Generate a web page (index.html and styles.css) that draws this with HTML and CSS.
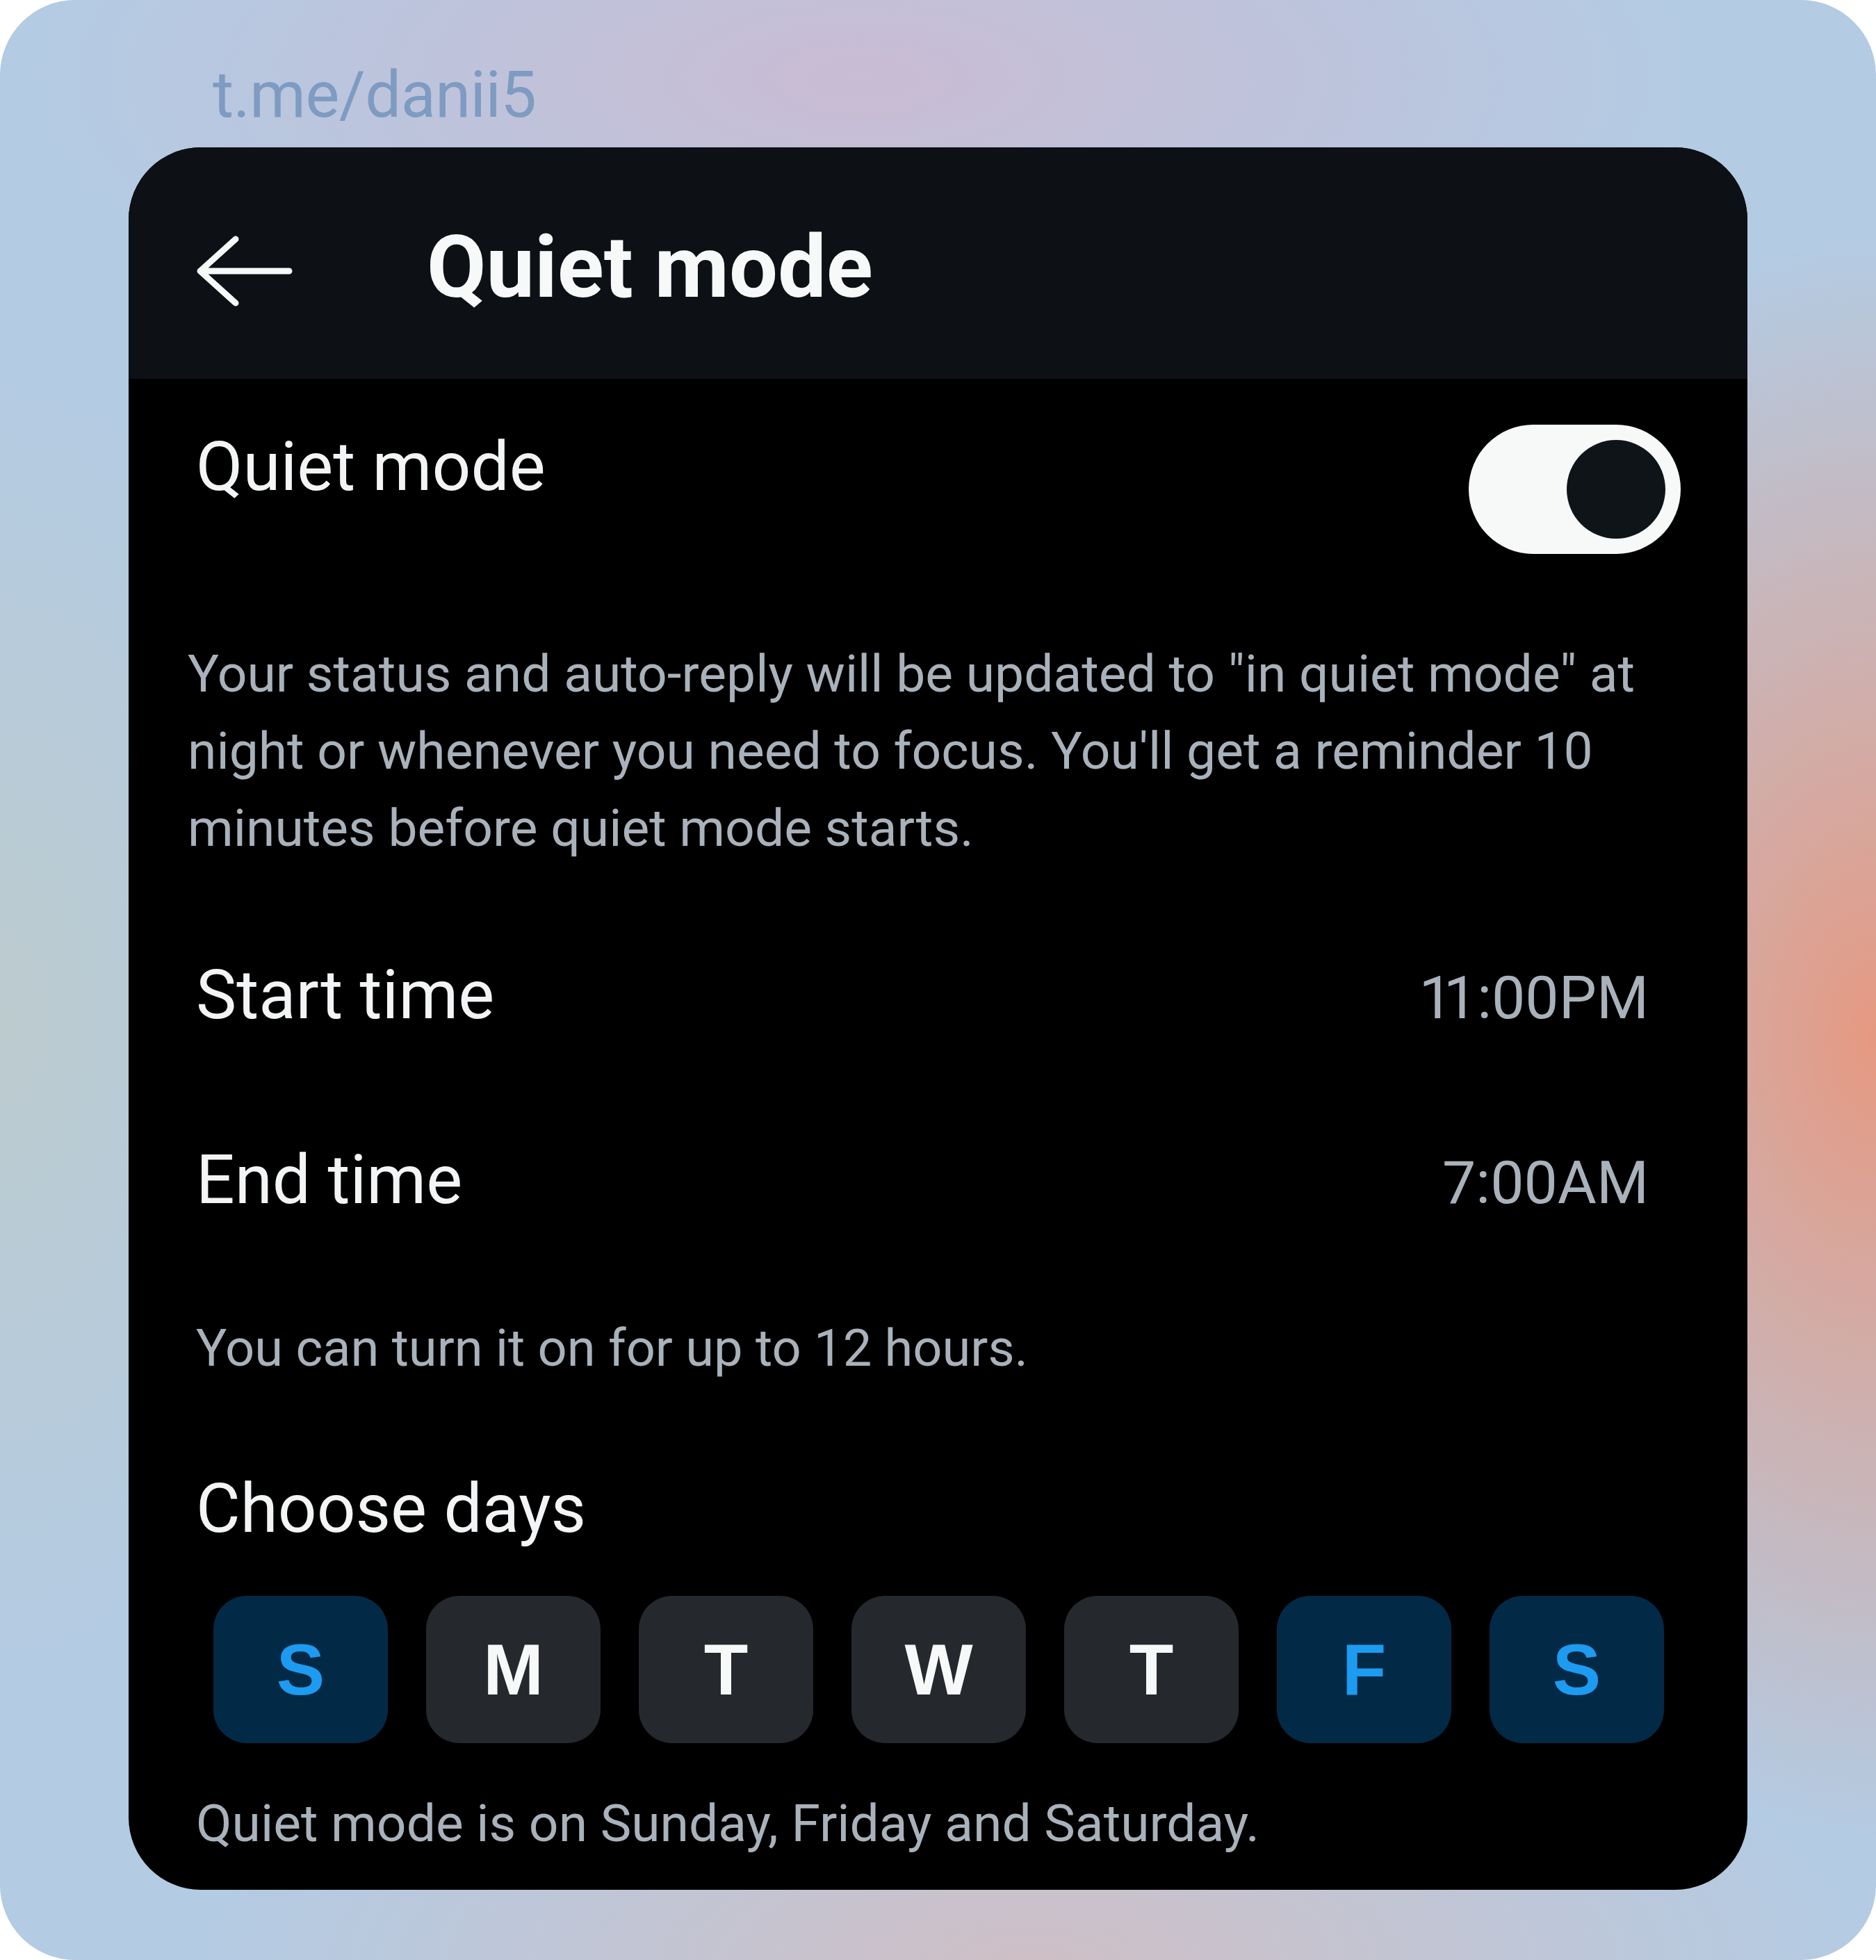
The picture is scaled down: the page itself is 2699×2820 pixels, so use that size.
FILE: index.html
```html
<!DOCTYPE html>
<html lang="en">
<head>
<meta charset="utf-8">
<title>Quiet mode</title>
<link rel="stylesheet" href="styles.css">
</head>
<body>
<div class="frame">
  <div class="watermark">t.me/danii5</div>
  <div class="card">
    <header class="topbar">
      <svg class="back" width="140" height="104" viewBox="0 0 140 104" aria-hidden="true">
        <path d="M58 6 L7 52 L58 98 M7 52 H135" fill="none" stroke="#f7f9f9" stroke-width="9" stroke-linecap="round" stroke-linejoin="round"/>
      </svg>
      <h1 class="title">Quiet mode</h1>
    </header>
    <section class="content">
      <div class="toggle-row">
        <span class="label">Quiet mode</span>
        <span class="switch"><span class="knob"></span></span>
      </div>
      <p class="desc">Your status and auto-reply will be updated to "in quiet mode" at<br>night or whenever you need to focus. You'll get a reminder 10<br>minutes before quiet mode starts.</p>
      <div class="time-row">
        <span class="label">Start time</span>
        <span class="value"><span class="ones">11</span>:00PM</span>
      </div>
      <div class="time-row time-row-end">
        <span class="label">End time</span>
        <span class="value">7:00AM</span>
      </div>
      <p class="note note-limit">You can turn it on for up to 12 hours.</p>
      <div class="label days-label">Choose days</div>
      <div class="days">
        <span class="day day-on">S</span>
        <span class="day">M</span>
        <span class="day">T</span>
        <span class="day">W</span>
        <span class="day">T</span>
        <span class="day day-on">F</span>
        <span class="day day-on">S</span>
      </div>
      <p class="note summary">Quiet mode is on Sunday, Friday and Saturday.</p>
    </section>
  </div>
</div>
</body>
</html>
```

FILE: styles.css
```css
html, body {
  margin: 0;
  padding: 0;
  background: #ffffff;
}

body {
  width: 2699px;
  height: 2820px;
  font-family: Roboto, "Liberation Sans", sans-serif;
}

.frame {
  box-sizing: border-box;
  width: 2699px;
  height: 2820px;
  border-radius: 108px;
  overflow: hidden;
  padding: 83px 185px 0;
  background:
    radial-gradient(ellipse 720px 1150px at 100% 53%, rgba(232, 150, 124, 0.95), rgba(232, 150, 124, 0) 100%),
    radial-gradient(ellipse 1200px 460px at 46% 4%, rgba(208, 182, 206, 0.75), rgba(208, 182, 206, 0) 100%),
    radial-gradient(ellipse 1200px 420px at 55% 100%, rgba(214, 188, 190, 0.8), rgba(214, 188, 190, 0) 100%),
    radial-gradient(ellipse 520px 950px at 0% 52%, rgba(190, 202, 198, 0.75), rgba(190, 202, 198, 0) 100%),
    #b3cbe3;
}

.watermark {
  margin-left: 121px;
  height: 108px;
  font-size: 92px;
  line-height: 108px;
  letter-spacing: -0.5px;
  color: #7e9bc2;
}

.card {
  margin-top: 21px;
  border-radius: 104px;
  overflow: hidden;
  background: #000000;
}

.topbar {
  box-sizing: border-box;
  height: 333px;
  padding-top: 12px;
  display: flex;
  align-items: center;
  background: #0d1015;
}

.back {
  display: block;
  margin-left: 96px;
  margin-top: 10px;
  flex: none;
}

.title {
  margin: 0 0 0 193px;
  font-size: 124px;
  line-height: 145px;
  font-weight: 700;
  color: #f7f9f9;
}

.content {
  padding: 0 146px 54px 97px;
}

.label {
  font-size: 98px;
  line-height: 115px;
  color: #f2f4f5;
}

.toggle-row {
  display: flex;
  justify-content: space-between;
  align-items: flex-start;
  padding-top: 66px;
}

.toggle-row .label {
  margin-top: 3px;
}

.switch {
  box-sizing: border-box;
  width: 305px;
  height: 186px;
  margin-right: -50px;
  border-radius: 93px;
  background: #f7f9f9;
  display: flex;
  align-items: center;
  justify-content: flex-end;
  padding: 0 22px;
}

.knob {
  width: 142px;
  height: 142px;
  border-radius: 50%;
  background: #0f1419;
}

.desc {
  margin: 117px 0 0 -12px;
  font-size: 75px;
  line-height: 111px;
  color: #a9b2bb;
  white-space: nowrap;
}

.time-row {
  display: flex;
  justify-content: space-between;
  align-items: baseline;
  margin-top: 127px;
}

.time-row-end {
  margin-top: 151px;
}

.value {
  font-size: 86px;
  color: #a9b2bb;
  margin-right: -4px;
}

.ones {
  letter-spacing: -13px;
  margin-right: 13px;
}

.note {
  margin: 143px 0 0;
  font-size: 75px;
  line-height: 84px;
  color: #a9b2bb;
  white-space: nowrap;
}

.note-limit {
  font-size: 74px;
}

.days-label {
  margin-top: 131px;
}

.days {
  display: flex;
  gap: 55px;
  margin: 68px 0 0 25px;
}

.day {
  flex: none;
  width: 251px;
  height: 212px;
  border-radius: 48px;
  background: #25282d;
  color: #f7f9f9;
  display: flex;
  align-items: center;
  justify-content: center;
  font-family: "Liberation Sans", Arial, sans-serif;
  font-weight: 700;
  font-size: 104px;
  line-height: 1;
}

.day-on {
  background: #022a47;
  color: #1d9bf0;
}

.summary {
  margin-top: 73px;
}
```
